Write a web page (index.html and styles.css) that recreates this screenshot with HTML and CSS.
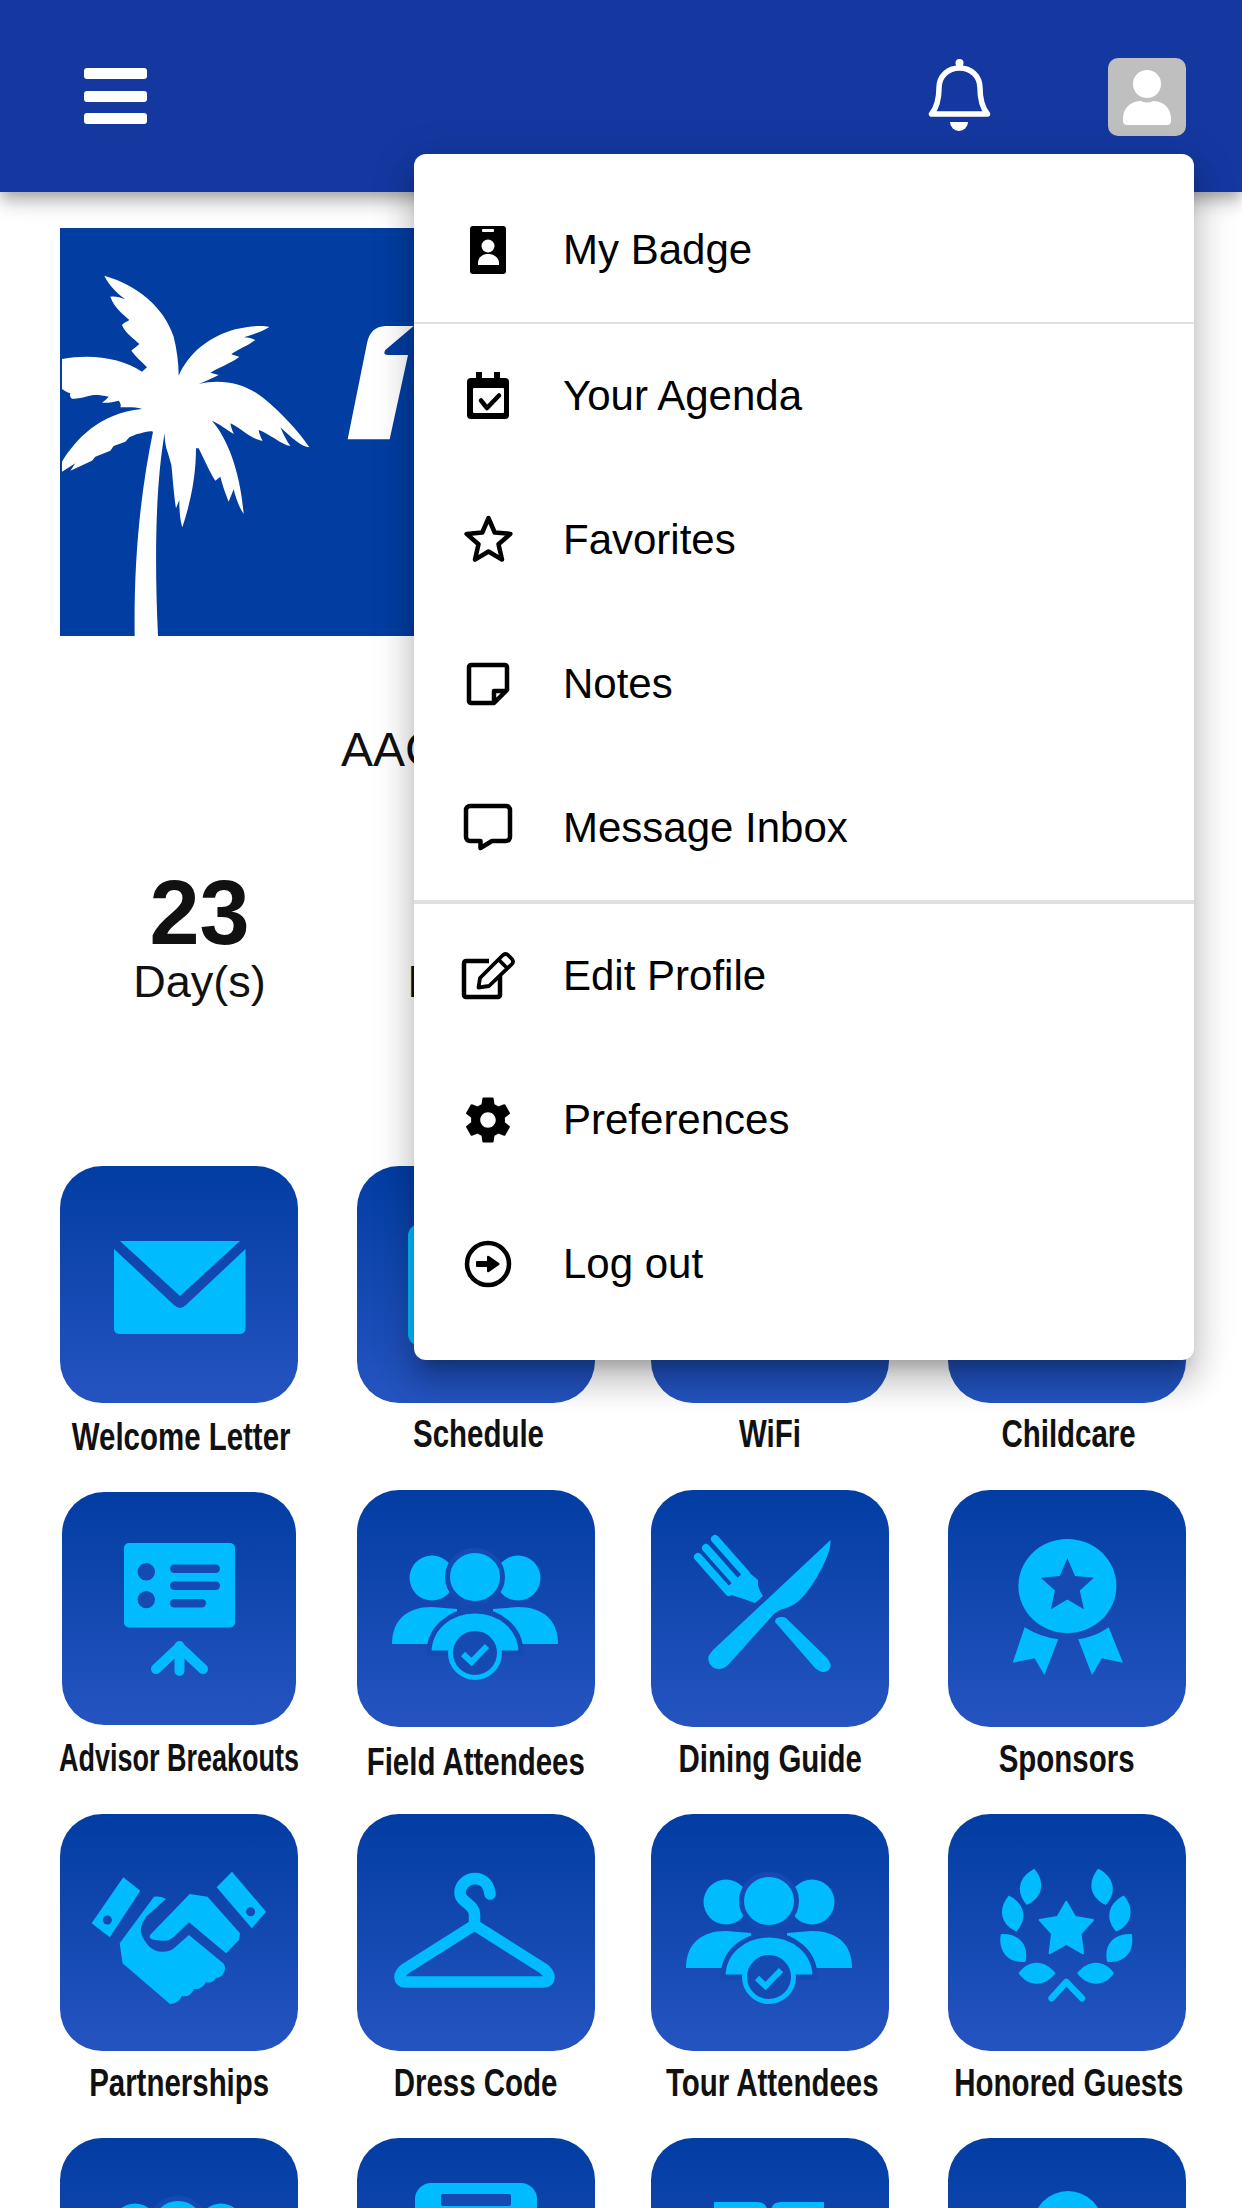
FILE: index.html
```html
<!DOCTYPE html>
<html lang="en">
<head>
    <meta charset="UTF-8">
    <meta name="viewport" content="width=device-width, initial-scale=1.0">
    <title>Event Home</title>
    <link rel="stylesheet" href="styles.css">
</head>
<body>
    <svg class="defs" width="0" height="0">
        <symbol id="people" viewBox="0 0 238 237">
            <circle class="ic" cx="75" cy="88" r="22.5"/>
            <circle class="ic" cx="161" cy="88" r="22.5"/>
            <ellipse class="ic gap-line" cx="118" cy="87" rx="27.5" ry="26.5"/>
            <path class="ic" d="M35 154 C35 130 50 117 75 117 L100 119 V154 Z"/>
            <path class="ic" d="M201 154 C201 130 186 117 161 117 L136 119 V154 Z"/>
            <path class="ic gap-line" d="M72 163 C72 138 93 121 118 121 C143 121 164 138 164 163 Z"/>
            <circle class="gap ring" cx="118" cy="163" r="24.5"/>
            <path class="stroke thin" d="M106 164 L114.5 172 L130 156"/>
        </symbol>
    </svg>

    <header class="top-bar">
        <button class="burger"><span></span><span></span><span></span></button>
        <svg class="bell" viewBox="0 0 64 74">
            <circle class="white" cx="31.5" cy="4" r="4"/>
            <path class="bell-line" d="M3.5 55 H59.5 C53 47 52 38 52 29 C52 17 43 9 31.5 9 C20 9 11 17 11 29 C11 38 10 47 3.5 55 Z"/>
            <path class="white" d="M22 63 H40 A9 9 0 0 1 22 63 Z"/>
        </svg>
        <div class="avatar">
            <svg viewBox="0 0 78 78">
                <circle class="white" cx="39" cy="26" r="14"/>
                <path class="white" d="M15 60 C15 50 23 43 33 43 Q39 46 45 43 C55 43 63 50 63 60 V63 Q63 67 59 67 H19 Q15 67 15 63 Z"/>
            </svg>
        </div>
    </header>

    <main>
        <div class="banner">
            <svg viewBox="60 54 3366 1224">
                <path class="white" d="M187 197 C285 225 365 290 395 380 C405 420 410 460 410 497 C440 430 500 380 580 358 C620 348 660 346 682 351 C660 365 630 375 605 382 C620 382 630 386 640 390 C620 405 590 418 568 432 C575 436 585 438 592 440 C570 458 535 470 505 488 L530 495 C510 505 490 515 470 522 C540 505 610 520 665 565 C720 610 770 665 802 712 C780 712 745 680 715 652 C725 675 735 695 745 708 C720 705 680 670 650 660 C652 672 656 682 662 692 C630 690 590 650 565 640 C568 652 570 662 576 672 C555 660 530 640 510 632 C560 690 595 790 605 912 C590 890 580 860 575 838 L560 875 C550 850 540 820 535 800 L520 812 C505 790 490 755 470 715 L462 715 C462 800 445 880 421 952 C415 930 412 910 412 870 L402 895 C395 850 392 800 388 765 L378 730 C370 710 368 690 368 670 C345 800 335 1000 348 1278 H278 C275 1050 295 850 333 665 C315 660 300 672 285 672 L262 682 L250 695 L215 708 L205 722 L160 740 L150 752 L85 782 L100 760 L60 785 V755 C100 690 170 610 300 597 C280 590 255 592 235 592 C238 585 235 578 230 572 C215 576 195 580 180 578 C188 572 195 566 200 560 C180 556 165 554 150 556 C130 560 110 568 90 566 C85 562 82 556 85 550 C75 548 68 542 60 537 V447 C150 430 240 445 300 485 L315 472 C300 455 280 440 268 422 C275 415 285 410 292 402 C275 385 250 370 240 345 C245 338 255 335 262 330 C240 310 215 290 205 260 C220 258 235 262 250 268 C225 250 200 225 187 197 Z"/>
                <path class="white" d="M917 688 L975 400 C982 365 1000 350 1030 348 L1115 348 L1030 420 Q1020 435 1040 435 H1098 L1043 688 Z"/>
            </svg>
        </div>

        <h1 class="title">AAC</h1>

        <div class="countdown">
            <div class="count"><div class="count-num">23</div><div class="count-label">Day(s)</div></div>
            <div class="count"><div class="count-num"></div><div class="count-label">Hour(s)</div></div>
        </div>

        <section class="tiles">
            <a class="item">
                <div class="tile"><svg viewBox="0 0 238 237">
                    <path class="ic" d="M60 75 H180 L120 130 Z"/>
                    <path class="ic" d="M54 83 L114 139 Q120 145 126 139 L185.5 83 V163 a5 5 0 0 1 -5 5 H59 a5 5 0 0 1 -5 -5 Z"/>
                </svg></div>
                <div class="label label-down label-right"><span>Welcome Letter</span></div>
            </a>
            <a class="item">
                <div class="tile"><svg viewBox="0 0 238 237">
                    <rect class="ic" x="51" y="58" width="136" height="122" rx="12"/>
                </svg></div>
                <div class="label label-right"><span>Schedule</span></div>
            </a>
            <a class="item">
                <div class="tile"></div>
                <div class="label"><span>WiFi</span></div>
            </a>
            <a class="item">
                <div class="tile"></div>
                <div class="label label-right"><span>Childcare</span></div>
            </a>

            <a class="item">
                <div class="tile tile-small"><svg viewBox="2 2 234 233">
                    <rect class="ic" x="64" y="53" width="111" height="84.5" rx="5"/>
                    <circle class="gap" cx="86.3" cy="81.8" r="8.7"/>
                    <circle class="gap" cx="86.3" cy="109.6" r="8.7"/>
                    <rect class="gap" x="110" y="74.5" width="50" height="8.4" rx="4.2"/>
                    <rect class="gap" x="110" y="91.5" width="50" height="8.4" rx="4.2"/>
                    <rect class="gap" x="110" y="109" width="36" height="8.4" rx="4.2"/>
                    <path class="stroke" d="M119.5 156 V181 M96 179 L119.5 157 L143 179"/>
                </svg></div>
                <div class="label label-tight"><span>Advisor Breakouts</span></div>
            </a>
            <a class="item">
                <div class="tile"><svg viewBox="0 0 238 237"><use href="#people"/></svg></div>
                <div class="label label-low"><span>Field Attendees</span></div>
            </a>
            <a class="item">
                <div class="tile"><svg viewBox="0 0 238 237">
                    <path class="ic" d="M179.5 50 C180 62 172 76 166 87 C156 104 146 114 138 117 C132 119 127 120 123 124 L77 175 C70 182 60 179 58 172 C56 167 58 165 62 160 Z"/>
                    <path class="ic" d="M124 132 Q124 127 131 127 Q135 127 137 130 L176 168 Q182 175 178 180 Q172 185 164 178 Z"/>
                    <path class="stroke fork" d="M64 49 L95 84 M55 58 L85 92 M47 67 L78 102"/>
                    <path class="ic" d="M73 100 Q80 106 90 108 L104 113 L112 106 Q106 98 107 90 L95 80 Z"/>
                </svg></div>
                <div class="label label-mid"><span>Dining Guide</span></div>
            </a>
            <a class="item">
                <div class="tile"><svg viewBox="0 0 238 237">
                    <ellipse class="ic" cx="119.4" cy="96" rx="49" ry="47"/>
                    <path class="gap" d="M119.4 68.3 L127 86 L146 87.8 L131.8 100.5 L135.9 119.2 L119.4 109.5 L102.9 119.2 L107 100.5 L92.8 87.8 L111.8 86 Z"/>
                    <path class="ic" d="M76.6 137.3 Q92 147 110.3 149.3 L96.4 185 L86.5 168.3 L64.7 172.7 Z"/>
                    <path class="ic" d="M160.7 137.3 Q147 147 130.2 149.3 L144 185 L154 168.3 L175 172.7 Z"/>
                </svg></div>
                <div class="label label-mid"><span>Sponsors</span></div>
            </a>

            <a class="item">
                <div class="tile"><svg viewBox="0 0 238 237">
                    <path class="ic" d="M63.3 63.3 L80.3 76.7 L49.8 123.3 L31.6 109.3 Z"/>
                    <circle class="gap" cx="47.4" cy="106" r="4.5"/>
                    <path class="ic" d="M172 57.7 L206 97.7 L191.8 114.3 L156.6 73.3 Z"/>
                    <circle class="gap" cx="190.6" cy="97.7" r="4.5"/>
                    <path class="ic" d="M94 82.7 Q101 82 106 85 L86 102.7 Q78 115 82 122 Q90 138 102 137.7 Q110 138 114 134.3 L128.9 121 L163.3 149.3 Q166 153 164.5 157 Q162 164 156 164 Q152 170 146 168 Q142 176 134 175 Q130 184 122 182 Q118 190 110 190 L62.5 149.3 L59.7 129.3 Z"/>
                    <path class="ic" d="M90 121 L129.7 80 L147.5 82.7 L180 119.3 L179 126 L166 139.3 L129 108.3 L114 122.7 Q109 127 104 126.7 L95 126 Q88 125 90 121 Z"/>
                </svg></div>
                <div class="label label-mid"><span>Partnerships</span></div>
            </a>
            <a class="item">
                <div class="tile"><svg viewBox="0 0 238 237">
                    <path class="stroke hanger" d="M133 80 C132 70 126 64.5 118 64.5 C110 64.5 103 71 103 79 C103 88 117 90 117.5 100 V111"/>
                    <path class="stroke hanger" d="M117.5 111 L48 155 Q43 159 43 163 Q43 168 49 168 H186 Q192 168 192 163 Q192 159 187 155 Z"/>
                </svg></div>
                <div class="label label-mid"><span>Dress Code</span></div>
            </a>
            <a class="item">
                <div class="tile"><svg viewBox="0 0 238 237"><use href="#people"/></svg></div>
                <div class="label label-mid label-right"><span>Tour Attendees</span></div>
            </a>
            <a class="item">
                <div class="tile"><svg viewBox="0 0 238 237">
                    <path class="ic soft" d="M118.3 87.7 L127.1 102.9 L145 106 L132.6 119.6 L135 139.3 L118.3 130 L101.6 139.3 L104 119.6 L91.7 106 L109.5 102.9 Z"/>
                    <g id="wreath">
                        <path class="ic" transform="translate(82.5 73.3) rotate(12)" d="M0 -19 C14 -8 14 8 0 18 C-14 8 -14 -8 0 -19 Z"/>
                        <path class="ic" transform="translate(64.7 100) rotate(-12)" d="M0 -19 C14 -8 14 8 0 18 C-14 8 -14 -8 0 -19 Z"/>
                        <path class="ic" transform="translate(65.5 134.3) rotate(-42)" d="M0 -19 C14 -8 14 8 0 18 C-14 8 -14 -8 0 -19 Z"/>
                        <path class="ic" transform="translate(88.5 159.3) rotate(90)" d="M0 -19 C14 -8 14 8 0 18 C-14 8 -14 -8 0 -19 Z"/>
                    </g>
                    <use href="#wreath" transform="translate(236.6 0) scale(-1 1)"/>
                    <path class="stroke chevron" d="M103.6 184.3 L118.3 168 L134 184.3"/>
                </svg></div>
                <div class="label label-mid label-right"><span>Honored Guests</span></div>
            </a>

            <a class="item">
                <div class="tile"><svg viewBox="0 0 238 237"><use href="#people"/></svg></div>
            </a>
            <a class="item">
                <div class="tile"><svg viewBox="0 0 238 237">
                    <rect class="ic" x="58" y="45" width="122" height="180" rx="16"/>
                    <rect class="gap" x="84" y="56" width="70" height="12" rx="2"/>
                </svg></div>
            </a>
            <a class="item">
                <div class="tile"><svg viewBox="0 0 238 237">
                    <path class="ic" d="M63 64 H106 Q116 64 116.6 74 V170 H63 Z"/>
                    <path class="ic" d="M173 64 H130 Q120 64 120 74 V170 H173 Z"/>
                </svg></div>
            </a>
            <a class="item">
                <div class="tile"><svg viewBox="0 0 238 237">
                    <circle class="ic" cx="120" cy="88" r="35"/>
                </svg></div>
            </a>
        </section>
    </main>

    <nav class="menu">
        <a class="menu-item">
            <svg viewBox="0 0 72 72">
                <rect class="black" x="18" y="12" width="36" height="48" rx="3"/>
                <rect class="white" x="30" y="15" width="12" height="3" rx="1"/>
                <circle class="white" cx="36" cy="32" r="6.5"/>
                <path class="white" d="M26 49 C26 43 31 40 36 40 C41 40 47 43 47 49 V51 H26 Z"/>
            </svg>
            <span>My Badge</span>
        </a>
        <div class="menu-line"></div>
        <a class="menu-item">
            <svg viewBox="0 0 72 72">
                <rect class="black" x="15" y="18" width="42" height="41" rx="4"/>
                <rect class="black" x="24" y="12" width="6" height="8"/>
                <rect class="black" x="42" y="12" width="6" height="8"/>
                <rect class="white" x="21" y="28" width="31" height="25" rx="1"/>
                <path class="line check" d="M29 40.5 L35 48 L47 35.5"/>
            </svg>
            <span>Your Agenda</span>
        </a>
        <a class="menu-item">
            <svg viewBox="0 0 72 72">
                <path class="line" d="M36.5 14 L42.7 28.5 L58.4 29.9 L46.5 40.2 L50 55.6 L36.5 47.5 L23 55.6 L26.5 40.2 L14.6 29.9 L30.3 28.5 Z"/>
            </svg>
            <span>Favorites</span>
        </a>
        <a class="menu-item">
            <svg viewBox="0 0 72 72">
                <path class="line" d="M42 55 H19 a2 2 0 0 1 -2 -2 V19 a2 2 0 0 1 2 -2 H53 a2 2 0 0 1 2 2 V42 Z M42 55 V43 H55"/>
            </svg>
            <span>Notes</span>
        </a>
        <a class="menu-item">
            <svg viewBox="0 0 72 72">
                <path class="line" d="M18 14 H54 a4 4 0 0 1 4 4 V45 a4 4 0 0 1 -4 4 H40 L28.5 56 V49 H18 a4 4 0 0 1 -4 -4 V18 a4 4 0 0 1 4 -4 Z"/>
            </svg>
            <span>Message Inbox</span>
        </a>
        <div class="menu-line menu-line-thick"></div>
        <a class="menu-item">
            <svg viewBox="0 0 72 72">
                <path class="line" d="M37 21 H14 a2 2 0 0 0 -2 2 V55 a2 2 0 0 0 2 2 H46 a2 2 0 0 0 2 -2 V36"/>
                <path class="line thin-line" d="M26.5 47.5 L28 38 L51 15 Q54 13 56 15 L60 19 Q62 22 60 24 L37 46 Z M47 20 L56 29"/>
            </svg>
            <span>Edit Profile</span>
        </a>
        <a class="menu-item">
            <svg viewBox="-3.3 -3.3 30.6 30.6">
                <path class="black" d="M19.14 12.94c.04-.3.06-.61.06-.94 0-.32-.02-.64-.07-.94l2.03-1.58c.18-.14.23-.41.12-.61l-1.92-3.32c-.12-.22-.37-.29-.59-.22l-2.39.96c-.5-.38-1.03-.7-1.62-.94l-.36-2.54c-.04-.24-.24-.41-.48-.41h-3.84c-.24 0-.43.17-.47.41l-.36 2.54c-.59.24-1.13.57-1.62.94l-2.39-.96c-.22-.08-.47 0-.59.22L2.74 8.87c-.12.21-.08.47.12.61l2.03 1.58c-.05.3-.09.63-.09.94s.02.64.07.94l-2.03 1.58c-.18.14-.23.41-.12.61l1.92 3.32c.12.22.37.29.59.22l2.39-.96c.5.38 1.03.7 1.62.94l.36 2.54c.05.24.24.41.48.41h3.84c.24 0 .44-.17.47-.41l.36-2.54c.59-.24 1.13-.56 1.62-.94l2.39.96c.22.08.47 0 .59-.22l1.92-3.32c.12-.22.07-.47-.12-.61l-2.01-1.58zM12 15.3c-1.8 0-3.3-1.5-3.3-3.3s1.5-3.3 3.3-3.3 3.3 1.5 3.3 3.3-1.5 3.3-3.3 3.3z"/>
            </svg>
            <span>Preferences</span>
        </a>
        <a class="menu-item">
            <svg viewBox="0 0 72 72">
                <circle class="line" cx="36" cy="36" r="21"/>
                <rect class="black" x="24" y="33" width="13" height="6" rx="1"/>
                <path class="black" d="M35 29 Q35 27 37 28 L47 35 Q48 36 47 37 L37 44 Q35 45 35 43 Z"/>
            </svg>
            <span>Log out</span>
        </a>
    </nav>
</body>
</html>
```

FILE: styles.css
```css
html, body {
    margin: 0;
    padding: 0;
}

body {
    position: relative;
    width: 1242px;
    height: 2208px;
    overflow: hidden;
    background-color: #fff;
    font-family: "Liberation Sans", Arial, sans-serif;
    color: #000;
}

.defs {
    position: absolute;
}

.white { fill: #fff; }
.black { fill: #000; }

/* top bar */
.top-bar {
    position: relative;
    z-index: 1;
    display: flex;
    align-items: center;
    height: 192px;
    padding: 0 56px 0 84px;
    box-sizing: border-box;
    background-color: #1438a0;
    box-shadow: 0 6px 12px -3px rgba(0, 0, 0, 0.2), 0 12px 15px 0 rgba(0, 0, 0, 0.14), 0 3px 30px 0 rgba(0, 0, 0, 0.12);
}

.burger {
    display: flex;
    flex-direction: column;
    justify-content: space-between;
    width: 63px;
    height: 56px;
    margin: 0 auto 0 0;
    padding: 0;
    border: none;
    background: none;
}

.burger span {
    display: block;
    height: 11px;
    border-radius: 3px;
    background-color: #fff;
}

.bell {
    width: 64px;
    height: 74px;
    margin: 0 116px 0 0;
}

.bell-line {
    fill: none;
    stroke: #fff;
    stroke-width: 5.5;
    stroke-linejoin: round;
}

.avatar {
    width: 78px;
    height: 78px;
    margin-top: 2px;
    border-radius: 10px;
    background-color: #bfbfbf;
}

.avatar svg {
    display: block;
}

/* page content */
.banner {
    height: 408px;
    margin: 36px 56px 0 60px;
    background-color: #023da1;
}

.banner svg {
    display: block;
    width: 100%;
    height: 100%;
}

.title {
    margin: 86px 0 0 341px;
    font-size: 48px;
    line-height: 56px;
    font-weight: normal;
    color: #111;
}

.countdown {
    display: grid;
    grid-template-columns: repeat(4, 283px);
    margin: 91px 0 0 58px;
    text-align: center;
    color: #111;
}

.count-num {
    height: 88px;
    font-size: 90px;
    line-height: 88px;
    font-weight: bold;
}

.count-label {
    font-size: 45px;
    line-height: 50px;
}

.tiles {
    display: grid;
    grid-template-columns: 297px 294px 297px 238px;
    grid-auto-rows: 324px;
    margin: 159px 56px 0 60px;
}

.tile {
    width: 238px;
    height: 237px;
    border-radius: 42px;
    overflow: hidden;
    background: linear-gradient(180deg, #023da3 0%, #2554c0 100%);
}

.tile svg {
    display: block;
    width: 100%;
    height: 100%;
}

.tile-small {
    width: 234px;
    height: 233px;
    margin: 2px;
}

.label {
    display: flex;
    justify-content: center;
    width: 238px;
    margin-top: 11px;
    font-size: 38px;
    line-height: 40px;
    font-weight: bold;
    white-space: nowrap;
    color: #111;
}

.label span {
    display: inline-block;
    transform: scaleX(0.775);
}

.label-down { margin-top: 14px; }
.label-mid { margin-top: 12px; }
.label-low { margin-top: 15px; }
.label-right { padding-left: 4px; box-sizing: border-box; }
.label-tight { margin-top: 13px; }
.label-tight span { transform: scaleX(0.71); }

/* tile icons */
.ic { fill: #00bcff; }
.gap { fill: #154ab3; }

.soft {
    stroke: #00bcff;
    stroke-width: 2;
    stroke-linejoin: round;
}

.gap-line {
    stroke: #154ab3;
    stroke-width: 5;
}

.ring {
    stroke: #00bcff;
    stroke-width: 5;
}

.stroke {
    fill: none;
    stroke: #00bcff;
    stroke-width: 10;
    stroke-linecap: round;
    stroke-linejoin: round;
}

.thin { stroke-width: 6; stroke-linecap: butt; stroke-linejoin: miter; }
.fork { stroke-width: 8; }
.hanger { stroke-width: 11.5; }
.chevron { stroke-width: 6.5; }

/* profile menu */
.menu {
    position: absolute;
    z-index: 2;
    top: 154px;
    left: 414px;
    width: 780px;
    padding: 24px 0;
    box-sizing: border-box;
    border-radius: 12px;
    background-color: #fff;
    box-shadow: 0 15px 15px -9px rgba(0, 0, 0, 0.2), 0 24px 30px 3px rgba(0, 0, 0, 0.14), 0 9px 42px 6px rgba(0, 0, 0, 0.12);
}

.menu-item {
    display: flex;
    align-items: center;
    height: 144px;
    padding-left: 38px;
    font-size: 42px;
}

.menu-item svg {
    width: 72px;
    height: 72px;
    margin-right: 39px;
    flex-shrink: 0;
}

.menu-line {
    height: 2px;
    background-color: #e0e0e0;
}

.menu-line-thick {
    height: 4px;
}

.line {
    fill: none;
    stroke: #000;
    stroke-width: 4.5;
    stroke-linejoin: round;
}

.check { stroke-width: 4.5; stroke-linecap: round; }
.thin-line { stroke-width: 3.8; }
```
